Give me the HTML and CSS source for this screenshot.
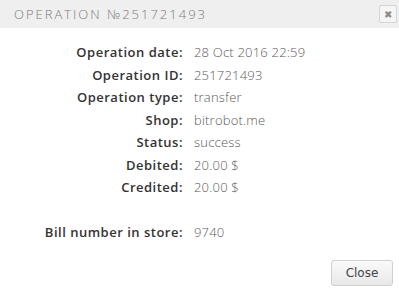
FILE: index.html
```html
<!DOCTYPE html>
<html lang="en">
<head>
    <meta charset="UTF-8">
    <title>Operation №251721493</title>
    <link rel="stylesheet" href="styles.css">
</head>
<body>
    <div class="modal">
        <div class="modal-header">
            <span class="modal-title">Operation №251721493</span>
            <span class="modal-close">&#10006;</span>
        </div>

        <div class="modal-body">
            <div class="info">
                <div class="label">Operation date:</div><div class="value">28 Oct 2016 22:59</div>
                <div class="label">Operation ID:</div><div class="value">251721493</div>
                <div class="label">Operation type:</div><div class="value">transfer</div>
                <div class="label">Shop:</div><div class="value">bitrobot.me</div>
                <div class="label">Status:</div><div class="value">success</div>
                <div class="label">Debited:</div><div class="value">20.00 $</div>
                <div class="label">Credited:</div><div class="value">20.00 $</div>
                <div class="label spacer"></div><div class="value spacer"></div>
                <div class="label">Bill number in store:</div><div class="value">9740</div>
            </div>
        </div>

        <div class="modal-footer">
            <button class="btn">Close</button>
        </div>
    </div>
</body>
</html>
```

FILE: styles.css
```css
body {
    margin: 0;
    background: #fff;
    font-family: "Open Sans", sans-serif;
}

.modal {
    width: 399px;
    height: 294px;
    display: flex;
    flex-direction: column;
}

/* Cabecera */
.modal-header {
    height: 28px;
    background: #efefef;
    display: flex;
    align-items: center;
    justify-content: space-between;
    padding: 0 2px 0 14px;
}

.modal-title {
    text-transform: uppercase;
    color: #7a7a7a;
    font-size: 13px;
    font-weight: 300;
    letter-spacing: 2px;
}

.modal-close {
    width: 16px;
    height: 16px;
    border: 1px solid #d6d6d6;
    border-radius: 2px;
    background: #f5f5f5;
    color: #8a8a8a;
    font-size: 10px;
    display: flex;
    align-items: center;
    justify-content: center;
}

/* Datos */
.modal-body {
    flex: 1;
    padding-top: 13px;
}

.info {
    display: grid;
    grid-template-columns: 183px auto;
    column-gap: 11px;
    font-size: 13px;
    line-height: 22.5px;
}

.label {
    text-align: right;
    font-weight: 600;
    color: #333;
    letter-spacing: 0.5px;
}

.value {
    color: #5a5a5a;
    font-weight: 300;
    letter-spacing: 0.2px;
}

.spacer {
    height: 22px;
}

/* Pie */
.modal-footer {
    display: flex;
    justify-content: flex-end;
    padding: 0 6px 8px 0;
}

.btn {
    width: 62px;
    height: 26px;
    font-family: "DejaVu Sans", sans-serif;
    font-size: 12px;
    color: #444;
    border: 1px solid #d0d0d0;
    border-radius: 3px;
    background: linear-gradient(#fafafa, #e8e8e8);
}
```
